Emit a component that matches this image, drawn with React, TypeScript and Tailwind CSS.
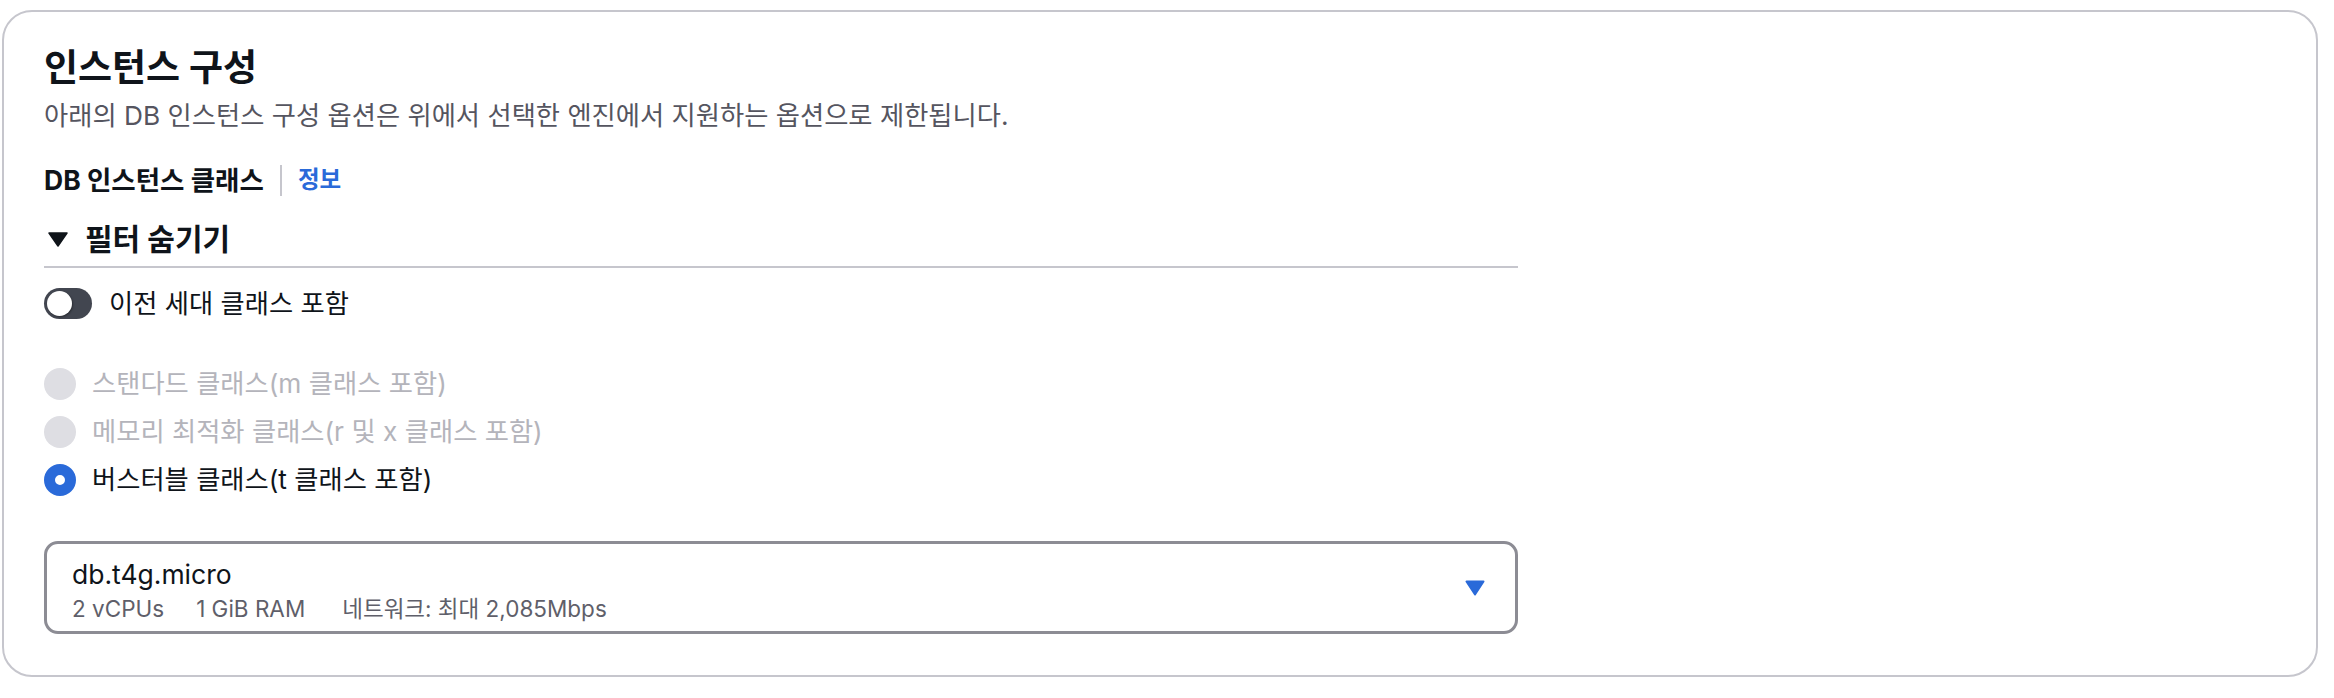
const radios = [
  { label: '스탠다드 클래스(m 클래스 포함)', disabled: true, checked: false },
  { label: '메모리 최적화 클래스(r 및 x 클래스 포함)', disabled: true, checked: false },
  { label: '버스터블 클래스(t 클래스 포함)', disabled: false, checked: true },
];

function Radio({ checked, disabled }: { checked: boolean; disabled: boolean }) {
  if (checked) {
    return <span className="box-border h-[32px] w-[32px] rounded-full border-[11px] border-[#2a6ad9] bg-white" />;
  }
  return (
    <span
      className={
        disabled
          ? 'h-[32px] w-[32px] rounded-full bg-[#dedee3]'
          : 'box-border h-[32px] w-[32px] rounded-full border-[3px] border-[#8c8c94] bg-white'
      }
    />
  );
}

export default function App() {
  return (
    <div className="min-h-screen bg-white pl-[2px] pt-[10px] font-['Inter','Noto_Sans_CJK_KR',sans-serif] text-[#0f141a]">
      <div className="box-border flex h-[667px] w-[2316px] flex-col rounded-[30px] border-2 border-[#c6c6cd] pl-[40px] pt-[34px]">
        <h2 className="text-[37px] font-bold leading-[44px]">인스턴스 구성</h2>
        <p className="mt-[10px] text-[26.3px] leading-[32px] text-[#55555f]">
          아래의 DB 인스턴스 구성 옵션은 위에서 선택한 엔진에서 지원하는 옵션으로 제한됩니다.
        </p>

        <div className="mt-[32px] flex h-[32px] items-center">
          <span className="text-[26.5px] font-bold leading-[32px]">DB 인스턴스 클래스</span>
          <span className="ml-[16px] mr-[16px] h-[31px] w-[2px] bg-[#c6c6cd]" />
          <a className="text-[23.5px] font-semibold leading-[32px] text-[#2a6ad9]">정보</a>
        </div>

        <div className="mt-[25px] w-[1474px] border-b-2 border-[#c6c6cd] pb-[9px]">
          <div className="flex h-[36px] items-center">
            <svg className="ml-[4px]" width="20" height="15" viewBox="0 0 20 15">
              <polygon points="1,1 19,1 10,14" fill="#0f141a" stroke="#0f141a" strokeWidth="1.5" strokeLinejoin="round" />
            </svg>
            <span className="ml-[17px] text-[30px] font-bold leading-[36px]">필터 숨기기</span>
          </div>
        </div>

        <div className="mt-[20px] flex h-[31px] items-center">
          <span className="flex h-[31px] w-[48px] items-center rounded-full bg-[#424650] pl-[3px]">
            <span className="h-[25px] w-[25px] rounded-full bg-white shadow-[1px_1px_2px_rgba(0,0,0,0.35)]" />
          </span>
          <span className="ml-[17px] text-[26.3px] leading-[32px]">이전 세대 클래스 포함</span>
        </div>

        <div className="mt-[41px] flex flex-col">
          {radios.map((r) => (
            <div key={r.label} className="flex h-[48px] items-center">
              <Radio checked={r.checked} disabled={r.disabled} />
              <span
                className={
                  r.disabled
                    ? 'ml-[16px] text-[26.3px] leading-[32px] text-[#b4b4bb]'
                    : 'ml-[16px] text-[26.3px] leading-[32px] text-[#0f141a]'
                }
              >
                {r.label}
              </span>
            </div>
          ))}
        </div>

        <div className="mt-[37px] box-border flex h-[93px] w-[1474px] justify-between rounded-[14px] border-[3px] border-[#8c8c94] pl-[25px] pr-[30px]">
          <div className="flex flex-col pt-[14px]">
            <span className="text-[26.5px] leading-[32px]">db.t4g.micro</span>
            <div className="mt-[5px] flex text-[22.5px] leading-[28px] text-[#5f5f6a]">
              <span>2 vCPUs</span>
              <span className="ml-[32px]">1 GiB RAM</span>
              <span className="ml-[37px]">네트워크: 최대 2,085Mbps</span>
            </div>
          </div>
          <svg className="self-center" width="20" height="16" viewBox="0 0 20 16">
            <polygon points="1.5,1.5 18.5,1.5 10,14.5" fill="#2a6ad9" stroke="#2a6ad9" strokeWidth="2" strokeLinejoin="round" />
          </svg>
        </div>
      </div>
    </div>
  );
}
